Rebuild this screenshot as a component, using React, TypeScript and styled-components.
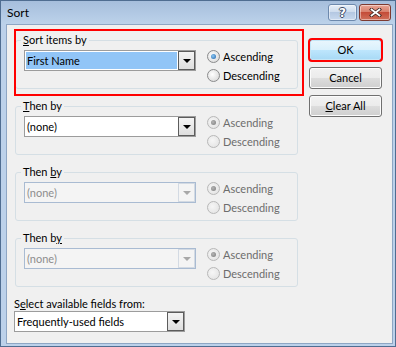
import styled, { createGlobalStyle } from 'styled-components';

const GlobalStyle = createGlobalStyle`
  html, body {
    margin: 0;
    padding: 0;
    background: #f0f0f0;
  }
  body {
    font-family: Lato, 'Noto Sans', sans-serif;
    font-size: 11px;
    color: #000;
  }
`;

const Window = styled.div`
  width: 396px;
  height: 347px;
  box-sizing: border-box;
  border: 1px solid #4f6d91;
  background: #bcd1ea;
  display: flex;
  flex-direction: column;
`;

const TitleBar = styled.div`
  height: 23px;
  flex: none;
  display: flex;
  align-items: center;
  padding: 0 4px 0 6px;
  background: linear-gradient(#a6bedc, #bcd2ea);
`;

const Title = styled.span`
  flex: 1;
  font-size: 12px;
  line-height: 14px;
`;

const CaptionButtons = styled.div`
  display: flex;
  gap: 2px;
`;

const CaptionButton = styled.div<{ $close?: boolean }>`
  width: ${(p) => (p.$close ? 32 : 29)}px;
  height: 17px;
  box-sizing: border-box;
  border-radius: 3px;
  border: 1px solid ${(p) => (p.$close ? '#7d3a30' : '#6d89ad')};
  background: ${(p) =>
    p.$close
      ? 'linear-gradient(#e9a595, #d77c68 50%, #c44c38 50%, #d0705a)'
      : 'linear-gradient(#e7eff9, #cbdaec 50%, #b4c8e2 50%, #c8d9ee)'};
  box-shadow: inset 0 0 0 1px rgba(255, 255, 255, 0.45);
  display: flex;
  align-items: center;
  justify-content: center;
`;

const HelpGlyph = styled.span`
  font-family: 'DejaVu Sans', sans-serif;
  font-weight: bold;
  font-size: 12px;
  line-height: 12px;
  color: #fff;
  text-shadow: -1px 0 #3c4c66, 1px 0 #3c4c66, 0 -1px #3c4c66, 0 1px #3c4c66;
`;

const FrameBody = styled.div`
  flex: 1;
  display: flex;
  min-height: 0;
  padding: 0 2px 2px 5px;
`;

const Client = styled.div`
  flex: 1;
  border: 1px solid #8ea6c4;
  background: #f0f0f0;
  padding: 8px 0 0 8px;
`;

const MainRow = styled.div`
  display: flex;
  align-items: flex-start;
`;

const LeftCol = styled.div`
  width: 283px;
  display: flex;
  flex-direction: column;
`;

const Highlight = styled.div`
  position: relative;
  margin-bottom: 10px;

  &::after {
    content: '';
    position: absolute;
    inset: -4px -6px -7px -1px;
    border: 2px solid #f00;
    pointer-events: none;
  }
`;

const Group = styled.fieldset<{ $flush?: boolean }>`
  margin: 0 0 ${(p) => (p.$flush ? 0 : 10)}px;
  padding: 0 0 3px 0;
  min-width: 0;
  border: 1px solid #d5dfe5;
  border-radius: 3px;
`;

const Legend = styled.legend`
  margin-left: 5px;
  padding: 0 2px;
  font-size: 11px;
  line-height: 14px;
`;

const Key = styled.span`
  text-decoration: underline;
`;

const GroupRow = styled.div`
  display: flex;
  align-items: flex-start;
`;

const Combo = styled.div<{ $disabled?: boolean; $width?: number }>`
  width: ${(p) => p.$width ?? 172}px;
  height: 21px;
  box-sizing: border-box;
  margin: 3px 0 0 8px;
  display: flex;
  border: 1px solid ${(p) => (p.$disabled ? '#a9bbd2' : '#9c9c9c')};
  background: ${(p) => (p.$disabled ? '#f4f4f4' : '#fff')};
`;

const ComboText = styled.div<{ $selected?: boolean; $disabled?: boolean }>`
  flex: 1;
  margin: 1px;
  padding-left: 1px;
  line-height: 17px;
  color: ${(p) => (p.$disabled ? '#8d8d8d' : '#000')};
  background: ${(p) => (p.$selected ? '#91c5f7' : 'transparent')};
  white-space: nowrap;
  overflow: hidden;
`;

const ComboArrow = styled.div<{ $disabled?: boolean }>`
  width: 17px;
  box-sizing: border-box;
  border: 1px solid ${(p) => (p.$disabled ? '#d3dae3' : '#5c5c5c')};
  background: ${(p) => (p.$disabled ? '#f4f4f4' : 'linear-gradient(#f4f4f4, #dedede)')};
  display: flex;
  align-items: center;
  justify-content: center;

  &::after {
    content: '';
    border-left: 4px solid transparent;
    border-right: 4px solid transparent;
    border-top: 4px solid ${(p) => (p.$disabled ? '#a8a8a8' : '#000')};
    margin-top: 1px;
  }
`;

const RadioCol = styled.div`
  margin-left: 11px;
  display: flex;
  flex-direction: column;
`;

const RadioRow = styled.div<{ $disabled?: boolean }>`
  height: 19px;
  display: flex;
  align-items: center;
  gap: 3px;
  color: ${(p) => (p.$disabled ? '#6d6d6d' : '#000')};
`;

const RadioCircle = styled.span<{ $checked?: boolean; $disabled?: boolean }>`
  width: 13px;
  height: 13px;
  box-sizing: border-box;
  border-radius: 50%;
  border: 1px solid ${(p) => (p.$disabled ? '#b8b8b8' : '#8a8b8c')};
  background: ${(p) =>
    p.$disabled
      ? 'radial-gradient(circle at 40% 40%, #f6f6f6, #e0e0e0)'
      : 'radial-gradient(circle at 40% 40%, #ffffff, #d2d2d2)'};
  display: flex;
  align-items: center;
  justify-content: center;

  &::after {
    content: '';
    display: ${(p) => (p.$checked ? 'block' : 'none')};
    width: 5px;
    height: 5px;
    border-radius: 50%;
    background: ${(p) =>
      p.$disabled
        ? 'radial-gradient(circle at 40% 40%, #b5b5b5, #7a7a7a)'
        : 'radial-gradient(circle at 40% 40%, #8cc8f4, #1d5fa6)'};
  }
`;

const ButtonCol = styled.div`
  margin-left: 11px;
  padding-top: 6px;
  display: flex;
  flex-direction: column;
  gap: 6px;
`;

const Button = styled.div<{ $default?: boolean; $marked?: boolean }>`
  width: 73px;
  height: 22px;
  box-sizing: border-box;
  border-radius: 3px;
  border: 1px solid ${(p) => (p.$default ? '#3c7fb1' : '#707070')};
  background: ${(p) =>
    p.$default
      ? 'linear-gradient(#eaf6fd, #d9f0fc 50%, #bee6fd 50%, #a7d9f5)'
      : 'linear-gradient(#f2f2f2, #ebebeb 50%, #dddddd 50%, #cfcfcf)'};
  box-shadow: inset 0 0 0 1px ${(p) => (p.$default ? '#c4e5f6' : '#fcfcfc')};
  outline: ${(p) => (p.$marked ? '2px solid #f00' : 'none')};
  outline-offset: -1px;
  display: flex;
  align-items: center;
  justify-content: center;
  line-height: 14px;
`;

const FieldsLabel = styled.div`
  margin: 0 0 0 -1px;
  line-height: 14px;
`;

const BottomCombo = styled(Combo)`
  margin: 0 0 0 -1px;
`;

type SortGroupProps = {
  legend: React.ReactNode;
  value: string;
  comboDisabled?: boolean;
  radiosDisabled?: boolean;
  selected?: boolean;
  flush?: boolean;
};

const SortGroup = ({ legend, value, comboDisabled, radiosDisabled, selected, flush }: SortGroupProps) => (
  <Group $flush={flush}>
    <Legend>{legend}</Legend>
    <GroupRow>
      <Combo $disabled={comboDisabled}>
        <ComboText $selected={selected} $disabled={comboDisabled}>
          {value}
        </ComboText>
        <ComboArrow $disabled={comboDisabled} />
      </Combo>
      <RadioCol>
        <RadioRow $disabled={radiosDisabled}>
          <RadioCircle $checked $disabled={radiosDisabled} />
          Ascending
        </RadioRow>
        <RadioRow $disabled={radiosDisabled}>
          <RadioCircle $disabled={radiosDisabled} />
          Descending
        </RadioRow>
      </RadioCol>
    </GroupRow>
  </Group>
);

const CloseIcon = () => (
  <svg width="13" height="9" viewBox="0 0 13 9">
    <path d="M2.5 1.5 L10.5 7.5 M10.5 1.5 L2.5 7.5" stroke="#3b2420" strokeWidth="3.4" strokeLinecap="square" />
    <path d="M2.5 1.5 L10.5 7.5 M10.5 1.5 L2.5 7.5" stroke="#fff" strokeWidth="1.7" strokeLinecap="square" />
  </svg>
);

export default function App() {
  return (
    <>
      <GlobalStyle />
      <Window>
        <TitleBar>
          <Title>Sort</Title>
          <CaptionButtons>
            <CaptionButton>
              <HelpGlyph>?</HelpGlyph>
            </CaptionButton>
            <CaptionButton $close>
              <CloseIcon />
            </CaptionButton>
          </CaptionButtons>
        </TitleBar>
        <FrameBody>
          <Client>
            <MainRow>
              <LeftCol>
                <Highlight>
                  <SortGroup
                    flush
                    selected
                    legend={
                      <>
                        <Key>S</Key>ort items by
                      </>
                    }
                    value="First Name"
                  />
                </Highlight>
                <SortGroup
                  radiosDisabled
                  legend={
                    <>
                      <Key>T</Key>hen by
                    </>
                  }
                  value="(none)"
                />
                <SortGroup
                  comboDisabled
                  radiosDisabled
                  legend={
                    <>
                      Then <Key>b</Key>y
                    </>
                  }
                  value="(none)"
                />
                <SortGroup
                  comboDisabled
                  radiosDisabled
                  legend={
                    <>
                      Then b<Key>y</Key>
                    </>
                  }
                  value="(none)"
                />
              </LeftCol>
              <ButtonCol>
                <Button $default $marked>
                  OK
                </Button>
                <Button>Cancel</Button>
                <Button>
                  <span>
                    <Key>C</Key>lear All
                  </span>
                </Button>
              </ButtonCol>
            </MainRow>
            <FieldsLabel>
              S<Key>e</Key>lect available fields from:
            </FieldsLabel>
            <BottomCombo $width={171}>
              <ComboText>Frequently-used fields</ComboText>
              <ComboArrow />
            </BottomCombo>
          </Client>
        </FrameBody>
      </Window>
    </>
  );
}
